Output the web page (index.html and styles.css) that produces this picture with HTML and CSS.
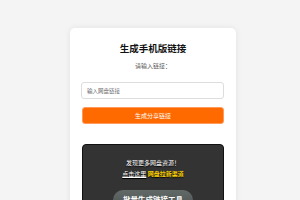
FILE: index.html
```html
<!DOCTYPE html>
<html lang="zh-CN">
<head>
    <meta charset="UTF-8">
    <meta name="viewport" content="width=device-width, initial-scale=1.0">
    <title>生成手机版链接</title>
    <link rel="stylesheet" href="styles.css">
</head>
<body>

    <div class="container">
        <h1>生成手机版链接</h1>
        <p class="label">请输入链接：</p>
        <input type="text" id="link" placeholder="输入网盘链接">
        <button class="make">生成分享链接</button>

        <!-- 推广 -->
        <div class="promo">
            <p>发现更多网盘资源！</p>
            <p><a href="#" class="here">点击这里</a> <a href="#" class="hot">网盘拉新渠道</a></p>
            <a href="#" class="tool">批量生成链接工具</a>
        </div>
    </div>

</body>
</html>
```

FILE: styles.css
```css
body {
    font-family: "Noto Sans CJK SC", "Noto Sans", sans-serif;
    background: #f4f4f4;
    color: #333;
    margin: 0;
    padding: 28px 0 0 6px;
}
.container {
    width: 142px;
    margin: 0 auto;
    padding: 14px 12px 30px 12px;
    background: #fff;
    border-radius: 5px;
    box-shadow: 0 0 6px rgba(0, 0, 0, 0.08);
    text-align: center;
}
h1 {
    margin: 0;
    font-size: 9.5px;
    line-height: 12px;
    color: #111;
}
.label {
    margin: 8px 0 0;
    font-size: 6px;
    line-height: 8px;
    color: #555;
}
input {
    display: block;
    box-sizing: border-box;
    width: 143px;
    height: 17px;
    margin: 12px 0 0 -1px;
    padding: 0 5px;
    font-family: inherit;
    font-size: 5.5px;
    border: 1px solid #ddd;
    border-radius: 3px;
    outline: none;
}
input::placeholder {
    color: #666;
}
button.make {
    display: block;
    box-sizing: border-box;
    width: 142px;
    height: 17px;
    margin: 8px 0 0;
    padding: 0;
    font-family: inherit;
    font-size: 6px;
    color: #fff;
    background: #ff6a00;
    border: 1px solid #ff9a5c;
    border-radius: 3px;
}
.promo {
    box-sizing: border-box;
    width: 142px;
    margin-top: 20px;
    padding: 12px 0 12px;
    background: #333;
    border: 1px solid #111;
    border-radius: 4px;
}
.promo p {
    margin: 0;
    font-size: 6px;
    line-height: 11px;
    color: #fff;
    text-shadow: 0 1px 1px #000;
}
.promo a.here {
    color: #fff;
}
.promo a.hot {
    color: #ffd500;
    font-weight: bold;
    text-decoration: none;
}
.tool {
    display: inline-block;
    margin-top: 11px;
    padding: 0 10px;
    height: 20px;
    line-height: 20px;
    font-size: 7.5px;
    font-weight: bold;
    color: #fff;
    text-decoration: none;
    background: linear-gradient(#626a68, #4a504f);
    border-radius: 10px;
}
```
